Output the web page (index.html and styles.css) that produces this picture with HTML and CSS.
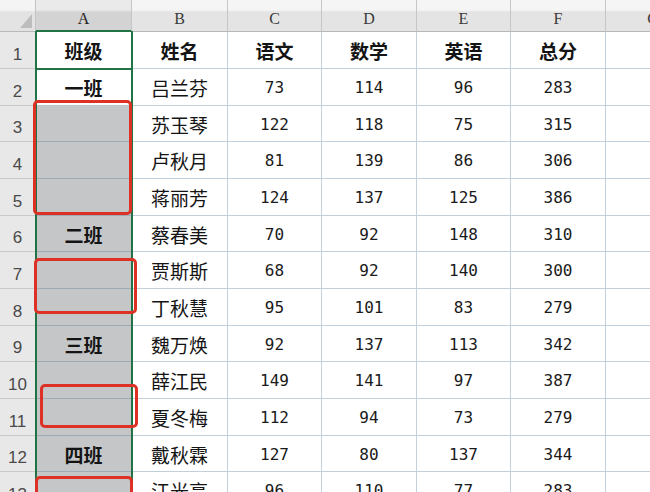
FILE: index.html
```html
<!DOCTYPE html>
<html lang="zh-CN">
<head>
<meta charset="utf-8">
<title>班级成绩表</title>
<link rel="stylesheet" href="styles.css">
</head>
<body>
<div class="sheet">
  <div class="grid">
    <div class="corner"><span class="tri"></span></div>
    <div class="ch sel">A</div><div class="ch">B</div><div class="ch">C</div><div class="ch">D</div><div class="ch">E</div><div class="ch">F</div><div class="ch">G</div>

    <div class="rh">1</div>
    <div class="c a h">班级</div><div class="c h">姓名</div><div class="c h">语文</div><div class="c h">数学</div><div class="c h">英语</div><div class="c h">总分</div><div class="c"></div>

    <div class="rh">2</div>
    <div class="c a h">一班</div><div class="c">吕兰芬</div><div class="c n">73</div><div class="c n">114</div><div class="c n">96</div><div class="c n">283</div><div class="c"></div>

    <div class="rh">3</div>
    <div class="c a g"></div><div class="c">苏玉琴</div><div class="c n">122</div><div class="c n">118</div><div class="c n">75</div><div class="c n">315</div><div class="c"></div>

    <div class="rh">4</div>
    <div class="c a g"></div><div class="c">卢秋月</div><div class="c n">81</div><div class="c n">139</div><div class="c n">86</div><div class="c n">306</div><div class="c"></div>

    <div class="rh">5</div>
    <div class="c a g"></div><div class="c">蒋丽芳</div><div class="c n">124</div><div class="c n">137</div><div class="c n">125</div><div class="c n">386</div><div class="c"></div>

    <div class="rh">6</div>
    <div class="c a g h">二班</div><div class="c">蔡春美</div><div class="c n">70</div><div class="c n">92</div><div class="c n">148</div><div class="c n">310</div><div class="c"></div>

    <div class="rh">7</div>
    <div class="c a g"></div><div class="c">贾斯斯</div><div class="c n">68</div><div class="c n">92</div><div class="c n">140</div><div class="c n">300</div><div class="c"></div>

    <div class="rh">8</div>
    <div class="c a g"></div><div class="c">丁秋慧</div><div class="c n">95</div><div class="c n">101</div><div class="c n">83</div><div class="c n">279</div><div class="c"></div>

    <div class="rh">9</div>
    <div class="c a g h">三班</div><div class="c">魏万焕</div><div class="c n">92</div><div class="c n">137</div><div class="c n">113</div><div class="c n">342</div><div class="c"></div>

    <div class="rh">10</div>
    <div class="c a g"></div><div class="c">薛江民</div><div class="c n">149</div><div class="c n">141</div><div class="c n">97</div><div class="c n">387</div><div class="c"></div>

    <div class="rh">11</div>
    <div class="c a g"></div><div class="c">夏冬梅</div><div class="c n">112</div><div class="c n">94</div><div class="c n">73</div><div class="c n">279</div><div class="c"></div>

    <div class="rh">12</div>
    <div class="c a g h">四班</div><div class="c">戴秋霖</div><div class="c n">127</div><div class="c n">80</div><div class="c n">137</div><div class="c n">344</div><div class="c"></div>

    <div class="rh">13</div>
    <div class="c a g"></div><div class="c">江光亮</div><div class="c n">96</div><div class="c n">110</div><div class="c n">77</div><div class="c n">283</div><div class="c"></div>
  </div>

  <div class="selframe"></div>
  <div class="selline"></div>

  <div class="mark m1"></div>
  <div class="mark m2"></div>
  <div class="mark m3"></div>
  <div class="mark m4"></div>
</div>
</body>
</html>
```

FILE: styles.css
```css
html, body {
  margin: 0;
  padding: 0;
  background: #ffffff;
}

body {
  width: 650px;
  height: 492px;
  overflow: hidden;
}

.sheet {
  position: relative;
  width: 650px;
  height: 492px;
  overflow: hidden;
}

.grid {
  display: grid;
  grid-template-columns: 36px 96px 96px 94px 95px 94px 95px 95px;
  grid-template-rows: 32px 37px 37px 36px 37px 37px 36px 37px 37px 36px 37px 37px 36px 37px;
  width: 701px;
}

.corner {
  position: relative;
  box-sizing: border-box;
  background: linear-gradient(#f4f4f4 0, #f4f4f4 10px, #e3e3e3 12px, #e3e3e3 100%);
  border-right: 1px solid #c4c4c4;
  border-bottom: 1px solid #b8b8b8;
}

.tri {
  position: absolute;
  right: 3px;
  bottom: 3px;
  width: 12px;
  height: 14px;
  background: #bdbdbd;
  clip-path: polygon(100% 0, 100% 100%, 0 100%);
}

.ch {
  box-sizing: border-box;
  background: linear-gradient(#f5f5f5 0, #f5f5f5 10px, #e4e4e4 12px, #e4e4e4 100%);
  border-right: 1px solid #c6c6c6;
  border-bottom: 1px solid #b8b8b8;
  display: flex;
  align-items: flex-end;
  justify-content: center;
  padding-bottom: 3px;
  font-family: "Liberation Serif", "DejaVu Serif", serif;
  font-size: 16px;
  color: #3a3a3a;
}

.ch.sel {
  background: linear-gradient(#eaeaea 0, #eaeaea 10px, #d3d3d3 12px, #d3d3d3 100%);
  border-bottom: 2px solid #217346;
  padding-bottom: 2px;
  color: #222;
}

.rh {
  box-sizing: border-box;
  background: #e8e8e8;
  border-right: 1px solid #bdbdbd;
  border-bottom: 1px solid #c9c9c9;
  display: flex;
  align-items: flex-end;
  justify-content: center;
  padding-bottom: 3px;
  font-family: "Liberation Sans", "DejaVu Sans", sans-serif;
  font-size: 17px;
  color: #4a4a4a;
}

.c {
  box-sizing: border-box;
  border-right: 1px solid #c2d0db;
  border-bottom: 1px solid #c2d0db;
  display: flex;
  align-items: center;
  justify-content: center;
  font-family: "Noto Sans CJK SC", "Noto Sans", sans-serif;
  font-size: 19px;
  color: #141414;
  padding-top: 1px;
}

.c.h {
  font-weight: 700;
}

.c.n {
  font-family: "DejaVu Sans Mono", "Liberation Mono", monospace;
  font-size: 16px;
  color: #1a1a1a;
}

.c.a {
  border-bottom-color: #b9c6cf;
}

.c.g {
  background: #c5c6c8;
  border-bottom-color: #9eaab4;
}

.selframe {
  position: absolute;
  left: 35px;
  top: 31px;
  width: 98px;
  height: 470px;
  box-sizing: border-box;
  border-left: 2px solid #217346;
  border-right: 2px solid #217346;
}

.selline {
  position: absolute;
  left: 35px;
  top: 68px;
  width: 98px;
  height: 2px;
  background: #217346;
}

.mark {
  position: absolute;
  box-sizing: border-box;
  border: 3px solid #dc3124;
  border-radius: 5px;
}

.m1 { left: 33px; top: 100px; width: 99px; height: 115px; }
.m2 { left: 34px; top: 258px; width: 103px; height: 56px; }
.m3 { left: 40px; top: 384px; width: 98px; height: 44px; }
.m4 { left: 35px; top: 476px; width: 98px; height: 44px; }
```
